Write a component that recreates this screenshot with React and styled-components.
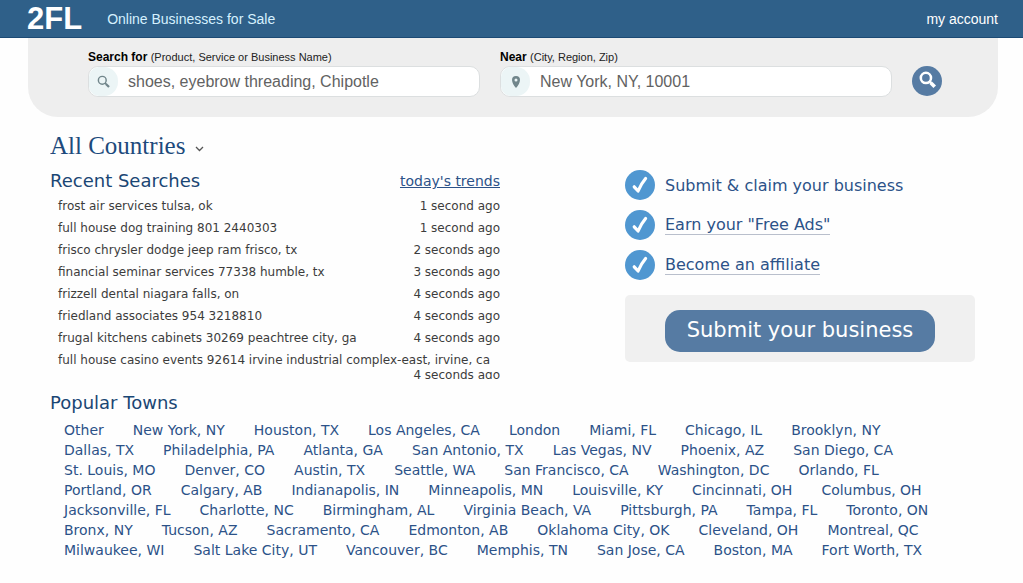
import React from 'react'
import styled, { createGlobalStyle } from 'styled-components'

const GlobalStyle = createGlobalStyle`
  * {
    box-sizing: border-box;
  }
  body {
    margin: 0;
    background: #fefefe;
    font-family: 'DejaVu Sans', Verdana, sans-serif;
    color: #3c3c3c;
  }
  h2, ul, p {
    margin: 0;
    padding: 0;
  }
  ul {
    list-style: none;
  }
  a {
    color: #2c5288;
    text-decoration: none;
  }
`

const Header = styled.header`
  display: flex;
  align-items: center;
  height: 38px;
  padding: 0 25px 0 27px;
  background: #2f6089;
  border-bottom: 1px solid #1c4a74;
  font-family: 'Liberation Sans', Arial, sans-serif;
`

const Logo = styled.a`
  color: #fff;
  font-size: 31px;
  font-weight: bold;
  line-height: 36px;
`

const HeaderLink = styled.a`
  color: ${props => props.$pale ? '#d5f1ff' : '#fff'};
  font-size: 14px;
  margin-left: ${props => props.$right ? 'auto' : '25px'};
`

const SearchPanel = styled.form`
  display: grid;
  grid-template-columns: 1fr 1fr 30px;
  gap: 20px;
  align-items: end;
  margin: 0 25px 0 28px;
  padding: 11px 56px 20px 60px;
  background: #eee;
  border-radius: 0 0 30px 30px;
  font-family: 'Liberation Sans', Arial, sans-serif;
`

const Label = styled.label`
  display: block;
  margin-bottom: 1px;
  font-size: 12px;
  font-weight: bold;
  line-height: 16px;
  color: #000;
  small {
    font-size: 11px;
    font-weight: normal;
    color: #222;
  }
`

const InputBox = styled.div`
  display: flex;
  height: 31px;
  background: #fff;
  border: 1px solid #dcdfe0;
  border-radius: 10px;
  overflow: hidden;
  input {
    flex: 1;
    min-width: 0;
    padding: 0 10px;
    border: none;
    outline: none;
    background: transparent;
    font-family: inherit;
    font-size: 16px;
    color: #333;
  }
  input::placeholder {
    color: #626262;
    opacity: 1;
  }
`

const InputIcon = styled.span`
  display: flex;
  align-items: center;
  justify-content: center;
  width: 29px;
  background: #ecf5f6;
  border-radius: 10px 14px 14px 10px;
`

const SearchButton = styled.button`
  display: flex;
  align-items: center;
  justify-content: center;
  width: 30px;
  height: 30px;
  margin-bottom: 1px;
  padding: 0 0 4px;
  border: none;
  border-radius: 50%;
  background: #567ba3;
  cursor: pointer;
`

const Main = styled.main`
  padding: 15px 48px 20px 50px;
`

const CountryPicker = styled.div`
  position: relative;
  display: inline-block;
  select {
    display: block;
    appearance: none;
    padding: 0 21px 0 0;
    border: none;
    background: transparent;
    font-family: 'Liberation Serif', Georgia, serif;
    font-size: 25px;
    line-height: 28px;
    color: #1d4a7c;
    cursor: pointer;
  }
  svg {
    position: absolute;
    right: 3px;
    bottom: 8px;
    pointer-events: none;
  }
`

const Columns = styled.div`
  display: grid;
  grid-template-columns: 9fr 7fr;
  gap: 125px;
  padding-top: 9px;
`

const TitleRow = styled.div`
  display: flex;
  align-items: center;
  justify-content: space-between;
  a {
    font-size: 14px;
    line-height: 24px;
    text-decoration: underline;
  }
`

const Title = styled.h2`
  font-size: 18px;
  font-weight: normal;
  line-height: 22px;
  color: #1a4674;
`

const RecentList = styled.ul`
  max-height: 186px;
  padding: 6px 0 0 8px;
  overflow: hidden;
  font-size: 12px;
  line-height: 15px;
`

const RecentItem = styled.li`
  display: flex;
  flex-wrap: wrap;
  margin-bottom: 7px;
  a {
    color: #3c3c3c;
  }
  time {
    margin-left: auto;
  }
`

const Perks = styled.ul`
  display: flex;
  flex-direction: column;
  gap: 10px;
  padding-top: 1px;
`

const Perk = styled.li`
  display: flex;
  align-items: center;
  gap: 10px;
  font-size: 16px;
  line-height: 19px;
  color: #2c5288;
  a {
    border-bottom: 1px solid #b9bfcc;
  }
`

const SubmitBox = styled.div`
  margin-top: 15px;
  padding: 15px 40px 10px;
  background: #f0f0f0;
  border-radius: 5px;
`

const SubmitButton = styled.button`
  width: 100%;
  height: 42px;
  padding: 0 0 2px;
  border: none;
  border-radius: 15px;
  background: #567ba3;
  color: #fff;
  font-family: inherit;
  font-size: 21px;
  white-space: nowrap;
  cursor: pointer;
`

const Towns = styled.section`
  padding-top: 13px;
`

const TownList = styled.ul`
  display: flex;
  flex-wrap: wrap;
  column-gap: 29px;
  padding: 6px 14px 0;
  font-size: 14px;
  line-height: 20px;
`

const Magnifier = ({ size, color, weight }) => (
  <svg width={size} height={size} viewBox="0 0 16 16" fill="none" stroke={color} aria-hidden="true">
    <circle cx="6.5" cy="6.5" r="4.8" strokeWidth={weight} />
    <path d="M10 10l1.5 1.2" strokeWidth={weight} />
    <path d="M11 11l3.8 3.8" strokeWidth={weight + 1} />
  </svg>
)

const Pin = () => (
  <svg width="8" height="12" viewBox="0 0 8 12" aria-hidden="true">
    <path fill="#71868b" fillRule="evenodd" d="M4 0a4 4 0 0 0-4 4c0 2.700 2 5.800 4 8 2-2.200 4-5.300 4-8a4 4 0 0 0-4-4zm0 2.500a1.500 1.500 0 1 1 0 3 1.500 1.500 0 0 1 0-3z" />
  </svg>
)

const Check = () => (
  <svg width="30" height="30" viewBox="0 0 30 30" aria-hidden="true">
    <circle cx="15" cy="15" r="15" fill="#5097d1" />
    <path
      d="M9.200 16.800l3.900 4.200C15 16.500 17.200 12.500 20.600 8.500"
      fill="none"
      stroke="#fff"
      strokeWidth="3.2"
      strokeLinecap="round"
      strokeLinejoin="round"
    />
  </svg>
)

const searches = [
  ['frost air services tulsa, ok', '1 second ago'],
  ['full house dog training 801 2440303', '1 second ago'],
  ['frisco chrysler dodge jeep ram frisco, tx', '2 seconds ago'],
  ['financial seminar services 77338 humble, tx', '3 seconds ago'],
  ['frizzell dental niagara falls, on', '4 seconds ago'],
  ['friedland associates 954 3218810', '4 seconds ago'],
  ['frugal kitchens cabinets 30269 peachtree city, ga', '4 seconds ago'],
  ['full house casino events 92614 irvine industrial complex-east, irvine, ca', '4 seconds ago'],
]

const towns = [
  'Other', 'New York, NY', 'Houston, TX', 'Los Angeles, CA', 'London', 'Miami, FL', 'Chicago, IL', 'Brooklyn, NY',
  'Dallas, TX', 'Philadelphia, PA', 'Atlanta, GA', 'San Antonio, TX', 'Las Vegas, NV', 'Phoenix, AZ', 'San Diego, CA',
  'St. Louis, MO', 'Denver, CO', 'Austin, TX', 'Seattle, WA', 'San Francisco, CA', 'Washington, DC', 'Orlando, FL',
  'Portland, OR', 'Calgary, AB', 'Indianapolis, IN', 'Minneapolis, MN', 'Louisville, KY', 'Cincinnati, OH', 'Columbus, OH',
  'Jacksonville, FL', 'Charlotte, NC', 'Birmingham, AL', 'Virginia Beach, VA', 'Pittsburgh, PA', 'Tampa, FL', 'Toronto, ON',
  'Bronx, NY', 'Tucson, AZ', 'Sacramento, CA', 'Edmonton, AB', 'Oklahoma City, OK', 'Cleveland, OH', 'Montreal, QC',
  'Milwaukee, WI', 'Salt Lake City, UT', 'Vancouver, BC', 'Memphis, TN', 'San Jose, CA', 'Boston, MA', 'Fort Worth, TX',
]

const App = () => (
  <>
    <GlobalStyle />
    <Header>
      <Logo href="#">2FL</Logo>
      <HeaderLink href="#sale" $pale>Online Businesses for Sale</HeaderLink>
      <HeaderLink href="#account" $right>my account</HeaderLink>
    </Header>
    <SearchPanel onSubmit={e => e.preventDefault()}>
      <div>
        <Label htmlFor="what">Search for <small>(Product, Service or Business Name)</small></Label>
        <InputBox>
          <InputIcon><Magnifier size={13} color="#71868b" weight={1.8} /></InputIcon>
          <input id="what" type="text" placeholder="shoes, eyebrow threading, Chipotle" />
        </InputBox>
      </div>
      <div>
        <Label htmlFor="where">Near <small>(City, Region, Zip)</small></Label>
        <InputBox>
          <InputIcon><Pin /></InputIcon>
          <input id="where" type="text" placeholder="New York, NY, 10001" />
        </InputBox>
      </div>
      <SearchButton type="submit" aria-label="Search">
        <Magnifier size={17} color="#fff" weight={2.4} />
      </SearchButton>
    </SearchPanel>
    <Main>
      <CountryPicker>
        <select aria-label="Country">
          <option>All Countries</option>
        </select>
        <svg width="9" height="6" viewBox="0 0 9 6" fill="none" stroke="#555" strokeWidth="1.3" aria-hidden="true">
          <path d="M1 1l3.500 3.500L8 1" />
        </svg>
      </CountryPicker>
      <Columns>
        <section>
          <TitleRow>
            <Title>Recent Searches</Title>
            <a href="#trends">today's trends</a>
          </TitleRow>
          <RecentList>
            {searches.map(([name, time]) => (
              <RecentItem key={name}>
                <a href="#search">{name}</a>
                <time>{time}</time>
              </RecentItem>
            ))}
          </RecentList>
        </section>
        <section>
          <Perks>
            <Perk><Check /><span>Submit &amp; claim your business</span></Perk>
            <Perk><Check /><a href="#ads">Earn your "Free Ads"</a></Perk>
            <Perk><Check /><a href="#affiliate">Become an affiliate</a></Perk>
          </Perks>
          <SubmitBox>
            <SubmitButton type="button">Submit your business</SubmitButton>
          </SubmitBox>
        </section>
      </Columns>
      <Towns>
        <Title>Popular Towns</Title>
        <TownList>
          {towns.map(town => (
            <li key={town}><a href="#town">{town}</a></li>
          ))}
        </TownList>
      </Towns>
    </Main>
  </>
)

export default App
